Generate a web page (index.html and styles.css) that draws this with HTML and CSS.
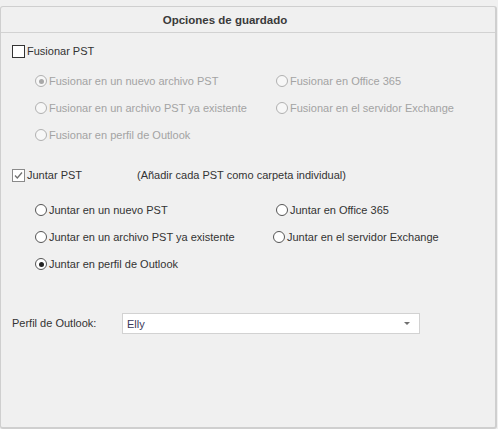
FILE: index.html
```html
<!DOCTYPE html>
<html>
<head>
<meta charset="utf-8">
<link rel="stylesheet" href="styles.css">
</head>
<body>
<div class="panel">
  <div class="header">Opciones de guardado</div>
  <div class="content">
    <div class="row check-row first">
      <span class="checkbox"></span><span class="label">Fusionar PST</span>
    </div>
    <div class="grid disabled group1">
      <div class="row"><span class="radio checked"></span><span class="label">Fusionar en un nuevo archivo PST</span></div>
      <div class="row"><span class="radio"></span><span class="label">Fusionar en Office 365</span></div>
      <div class="row"><span class="radio"></span><span class="label">Fusionar en un archivo PST ya existente</span></div>
      <div class="row"><span class="radio"></span><span class="label">Fusionar en el servidor Exchange</span></div>
      <div class="row"><span class="radio"></span><span class="label">Fusionar en perfil de Outlook</span></div>
    </div>
    <div class="row check-row second">
      <span class="checkbox on"><svg width="11" height="11" viewBox="0 0 11 11"><path d="M2 5.5 L4.3 8 L9 2.5" fill="none" stroke="#707070" stroke-width="1.3"/></svg></span><span class="label juntar">Juntar PST</span>
      <span class="note">(Añadir cada PST como carpeta individual)</span>
    </div>
    <div class="grid group2">
      <div class="row"><span class="radio"></span><span class="label">Juntar en un nuevo PST</span></div>
      <div class="row"><span class="radio"></span><span class="label">Juntar en Office 365</span></div>
      <div class="row"><span class="radio"></span><span class="label">Juntar en un archivo PST ya existente</span></div>
      <div class="row shift"><span class="radio"></span><span class="label">Juntar en el servidor Exchange</span></div>
      <div class="row"><span class="radio checked"></span><span class="label">Juntar en perfil de Outlook</span></div>
    </div>
    <div class="profile">
      <span class="plabel">Perfil de Outlook:</span>
      <div class="select"><span>Elly</span><span class="arrow"></span></div>
    </div>
  </div>
</div>
</body>
</html>
```
FILE: styles.css
```css
* { box-sizing: border-box; }
html, body { margin: 0; padding: 0; background: #f0f0f0; }
body {
  font-family: "Liberation Sans", Arial, sans-serif;
  font-size: 11px;
  color: #333;
  width: 498px;
  height: 429px;
  overflow: hidden;
}
.panel {
  margin-top: 6px;
  width: 497px;
  height: 423px;
  border: 1px solid #cfcfcf;
  border-right: 2px solid #cfcfcf;
  border-bottom: 2px solid #cfcfcf;
  border-radius: 3px;
  background: #f0f0f0;
}
.header {
  height: 26px;
  border-bottom: 1px solid #d2d2d2;
  border-radius: 3px 3px 0 0;
  display: flex;
  align-items: center;
  justify-content: center;
  font-weight: bold;
  font-size: 11.5px;
  color: #3a3a3a;
  padding-right: 46px;
  padding-top: 1px;
}
.content { padding-left: 11px; }
.row {
  display: flex;
  align-items: center;
  height: 20px;
  white-space: nowrap;
}
.first { margin-top: 8px; }
.second { margin-top: 20px; }
.checkbox {
  width: 13px;
  height: 13px;
  border: 1px solid #333;
  background: #fff;
  display: inline-flex;
  align-items: center;
  justify-content: center;
  margin-right: 2px;
  flex: none;
}
.checkbox.on { border-color: #8a8a8a; }
.checkbox svg { display: block; }
.juntar { width: 110px; }
.grid {
  display: grid;
  grid-template-columns: 241px 200px;
  row-gap: 7px;
  padding-left: 23px;
}
.group1 { margin-top: 10px; }
.group2 { margin-top: 15px; }
.radio {
  width: 12px;
  height: 12px;
  border-radius: 50%;
  border: 1px solid #555;
  background: #fff;
  margin-right: 2px;
  display: inline-flex;
  align-items: center;
  justify-content: center;
  flex: none;
}
.radio.checked::after {
  content: "";
  width: 5px;
  height: 5px;
  border-radius: 50%;
  background: #222;
}
.disabled { color: #a3a3a3; }
.disabled .radio { border-color: #b0b0b0; background: #f7f7f7; }
.disabled .radio.checked::after { background: #a8a8a8; }
.shift { margin-left: -3px; }
.profile {
  display: flex;
  align-items: center;
  margin-top: 38px;
  height: 22px;
}
.plabel { width: 110px; }
.select {
  width: 298px;
  height: 21px;
  border: 1px solid #d2d2d2;
  background: #fff;
  display: flex;
  align-items: center;
  justify-content: space-between;
  padding: 1px 9px 0 4px;
  color: #3a3a5a;
}
.arrow {
  width: 0;
  height: 0;
  border-left: 3px solid transparent;
  border-right: 3px solid transparent;
  border-top: 3px solid #707070;
}
```
